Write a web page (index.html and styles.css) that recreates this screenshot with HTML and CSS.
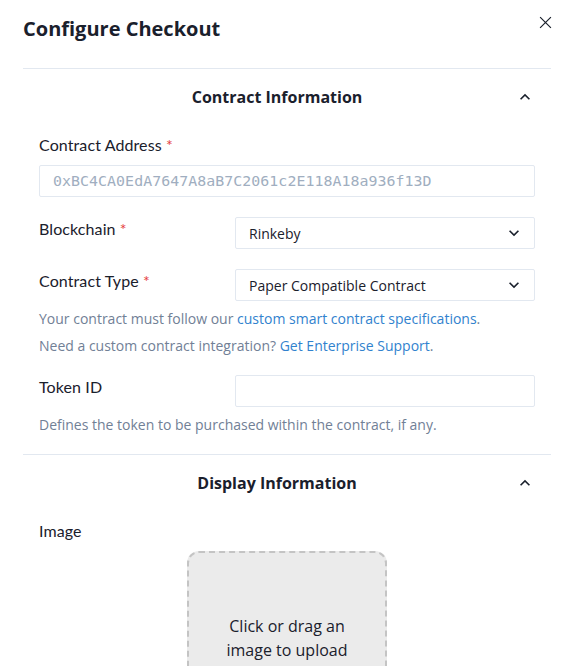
FILE: index.html
```html
<!DOCTYPE html>
<html lang="en">
<head>
<meta charset="utf-8">
<title>Configure Checkout</title>
<link rel="stylesheet" href="styles.css">
</head>
<body>
<div class="modal">
  <header class="modal-header">
    <h1 class="title">Configure Checkout</h1>
    <button class="close" aria-label="Close">
      <svg viewBox="0 0 24 24" width="13" height="13"><path d="M2 2 L22 22 M22 2 L2 22" stroke="#1a202c" stroke-width="2.2" fill="none"/></svg>
    </button>
  </header>
  <div class="modal-body">
    <section class="acc-item">
      <button class="acc-btn">
        <span class="acc-title">Contract Information</span>
        <svg class="chev" viewBox="0 0 24 24" width="20" height="20"><path d="M7.4 15.4 L12 10.8 L16.6 15.4 L18 14 L12 8 L6 14 Z" fill="#1a202c"/></svg>
      </button>
      <div class="acc-panel">
        <div class="field">
          <label class="label">Contract Address <span class="req">*</span></label>
          <div class="input mono placeholder">0xBC4CA0EdA7647A8aB7C2061c2E118A18a936f13D</div>
        </div>
        <div class="row">
          <label class="label">Blockchain <span class="req">*</span></label>
          <div class="select"><span>Rinkeby</span><svg viewBox="0 0 24 24" width="20" height="20"><path d="M16.6 8.6 L12 13.2 L7.4 8.6 L6 10 L12 16 L18 10 Z" fill="#1a202c"/></svg></div>
        </div>
        <div class="row">
          <label class="label">Contract Type <span class="req">*</span></label>
          <div class="select"><span>Paper Compatible Contract</span><svg viewBox="0 0 24 24" width="20" height="20"><path d="M16.6 8.6 L12 13.2 L7.4 8.6 L6 10 L12 16 L18 10 Z" fill="#1a202c"/></svg></div>
        </div>
        <p class="help first">Your contract must follow our <a href="#">custom smart contract specifications</a>.</p>
        <p class="help">Need a custom contract integration? <a href="#">Get Enterprise Support</a>.</p>
        <div class="row token">
          <label class="label">Token ID</label>
          <div class="input"></div>
        </div>
        <p class="help">Defines the token to be purchased within the contract, if any.</p>
      </div>
    </section>
    <section class="acc-item">
      <button class="acc-btn">
        <span class="acc-title">Display Information</span>
        <svg class="chev" viewBox="0 0 24 24" width="20" height="20"><path d="M7.4 15.4 L12 10.8 L16.6 15.4 L18 14 L12 8 L6 14 Z" fill="#1a202c"/></svg>
      </button>
      <div class="acc-panel">
        <label class="label">Image</label>
        <div class="upload">
          <span>Click or drag an image to upload</span>
        </div>
      </div>
    </section>
  </div>
</div>
</body>
</html>
```
FILE: styles.css
```css
* { box-sizing: border-box; }
html, body { margin: 0; padding: 0; background: #fff; }
body {
  font-family: "Open Sans", "Liberation Sans", sans-serif;
  color: #1a202c;
  overflow: hidden;
}
.modal { width: 570px; }
.modal-header {
  display: flex;
  justify-content: space-between;
  align-items: flex-start;
  padding: 14px 16px 0 23px;
  height: 68px;
}
.title {
  margin: 0;
  font-size: 20px;
  font-weight: 700;
  line-height: 30px;
  color: #1a202c;
}
.close {
  border: 0;
  background: none;
  padding: 0;
  width: 15px;
  height: 15px;
  margin: 1px 1px 0 0;
  display: flex;
  align-items: center;
  justify-content: center;
}
.modal-body { padding: 0 19px 0 23px; }
.acc-item { border-top: 1px solid #e2e8f0; }
.acc-btn {
  display: flex;
  align-items: center;
  width: 100%;
  border: 0;
  background: none;
  padding: 0 16px;
  height: 56px;
  font-family: inherit;
  color: #1a202c;
}
.acc-title {
  flex: 1;
  text-align: center;
  font-size: 16px;
  font-weight: 700;
  line-height: 24px;
}
.chev { flex: none; }
.acc-panel { padding: 8px 16px 19px; }
.label {
  font-family: "Lato", "Open Sans", sans-serif;
  font-size: 16px;
  line-height: 24px;
  color: #1a202c;
  letter-spacing: 0.1px;
}
.req { color: #e53e3e; }
.field .label { display: block; margin-bottom: 8px; }
.input {
  height: 32px;
  border: 1px solid #e2e8f0;
  border-radius: 2px;
  padding: 0 13px;
  display: flex;
  align-items: center;
  background: #fff;
}
.mono {
  font-family: "DejaVu Sans Mono", "Liberation Mono", monospace;
  font-size: 14.9px;
  letter-spacing: 0.05px;
}
.placeholder { color: #a0aec0; }
.row {
  display: grid;
  grid-template-columns: 196px 1fr;
  align-items: start;
  margin-top: 20px;
}
.select {
  height: 32px;
  border: 1px solid #e2e8f0;
  border-radius: 2px;
  padding: 0 10px 0 13px;
  display: flex;
  align-items: center;
  justify-content: space-between;
  font-size: 14px;
  color: #1a202c;
}
.help {
  margin: 0;
  font-size: 14px;
  line-height: 21px;
  color: #718096;
  margin-top: 6px;
}
.help.first { margin-top: 7px; }
.help a { color: #3182ce; text-decoration: none; }
.row.token { margin-top: 19px; }
.row.token + .help { margin-top: 7px; }
.acc-item + .acc-item .acc-panel { padding-top: 8px; }
.acc-item + .acc-item .label { display: block; }
.upload {
  width: 200px;
  height: 200px;
  margin: 8px auto 0;
  border: 2px dashed #c4c4c4;
  border-radius: 12px;
  background: #ebebeb;
  display: flex;
  align-items: center;
  justify-content: center;
  text-align: center;
  padding: 0 30px 26px;
  font-size: 16px;
  line-height: 24px;
  color: #1a202c;
}
```
